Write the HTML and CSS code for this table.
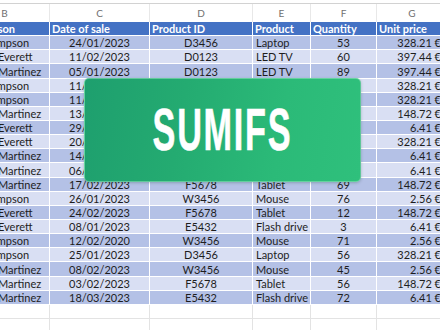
FILE: index.html
```html
<!DOCTYPE html>
<html>
<head>
<meta charset="utf-8">
<link rel="stylesheet" href="styles.css">
</head>
<body>
<div class="sheet">
  <div class="row letters"><div>B</div><div>C</div><div>D</div><div>E</div><div>F</div><div>G</div></div>
  <div class="row head"><div class="hb">Salesperson</div><div>Date of sale</div><div>Product ID</div><div>Product</div><div>Quantity</div><div>Unit price</div></div>
  <div class="row dark"><div class="nm t">Thompson</div><div class="c">24/01/2023</div><div class="c">D3456</div><div>Laptop</div><div class="c">53</div><div class="r">328.21 €</div></div>
  <div class="row light"><div class="nm">Everett</div><div class="c">11/02/2023</div><div class="c">D0123</div><div>LED TV</div><div class="c">60</div><div class="r">397.44 €</div></div>
  <div class="row dark"><div class="nm">Martinez</div><div class="c">05/01/2023</div><div class="c">D0123</div><div>LED TV</div><div class="c">89</div><div class="r">397.44 €</div></div>
  <div class="row light"><div class="nm t">Thompson</div><div class="c">11/01/2023</div><div class="c">D3456</div><div>Laptop</div><div class="c">40</div><div class="r">328.21 €</div></div>
  <div class="row dark"><div class="nm t">Thompson</div><div class="c">11/03/2023</div><div class="c">D3456</div><div>Laptop</div><div class="c">22</div><div class="r">328.21 €</div></div>
  <div class="row light"><div class="nm">Martinez</div><div class="c">13/02/2023</div><div class="c">F5678</div><div>Tablet</div><div class="c">35</div><div class="r">148.72 €</div></div>
  <div class="row dark"><div class="nm">Everett</div><div class="c">29/01/2023</div><div class="c">E5432</div><div>Flash drive</div><div class="c">18</div><div class="r">6.41 €</div></div>
  <div class="row light"><div class="nm">Everett</div><div class="c">20/02/2023</div><div class="c">D3456</div><div>Laptop</div><div class="c">27</div><div class="r">328.21 €</div></div>
  <div class="row dark"><div class="nm">Martinez</div><div class="c">14/01/2023</div><div class="c">E5432</div><div>Flash drive</div><div class="c">64</div><div class="r">6.41 €</div></div>
  <div class="row light"><div class="nm">Martinez</div><div class="c">06/03/2023</div><div class="c">E5432</div><div>Flash drive</div><div class="c">50</div><div class="r">6.41 €</div></div>
  <div class="row dark"><div class="nm">Martinez</div><div class="c">17/02/2023</div><div class="c">F5678</div><div>Tablet</div><div class="c">69</div><div class="r">148.72 €</div></div>
  <div class="row light"><div class="nm t">Thompson</div><div class="c">26/01/2023</div><div class="c">W3456</div><div>Mouse</div><div class="c">76</div><div class="r">2.56 €</div></div>
  <div class="row dark"><div class="nm">Everett</div><div class="c">24/02/2023</div><div class="c">F5678</div><div>Tablet</div><div class="c">12</div><div class="r">148.72 €</div></div>
  <div class="row light"><div class="nm">Everett</div><div class="c">08/01/2023</div><div class="c">E5432</div><div>Flash drive</div><div class="c">3</div><div class="r">6.41 €</div></div>
  <div class="row dark"><div class="nm t">Thompson</div><div class="c">12/02/2020</div><div class="c">W3456</div><div>Mouse</div><div class="c">71</div><div class="r">2.56 €</div></div>
  <div class="row light"><div class="nm t">Thompson</div><div class="c">25/01/2023</div><div class="c">D3456</div><div>Laptop</div><div class="c">56</div><div class="r">328.21 €</div></div>
  <div class="row dark"><div class="nm">Martinez</div><div class="c">08/02/2023</div><div class="c">W3456</div><div>Mouse</div><div class="c">45</div><div class="r">2.56 €</div></div>
  <div class="row light"><div class="nm">Martinez</div><div class="c">03/02/2023</div><div class="c">F5678</div><div>Tablet</div><div class="c">56</div><div class="r">148.72 €</div></div>
  <div class="row dark"><div class="nm">Martinez</div><div class="c">18/03/2023</div><div class="c">E5432</div><div>Flash drive</div><div class="c">72</div><div class="r">6.41 €</div></div>
  <div class="row empty"><div></div><div></div><div></div><div></div><div></div><div></div></div>
  <div class="row empty"><div></div><div></div><div></div><div></div><div></div><div></div></div>
</div>
<div class="card"><span class="title">SUMIFS</span></div>
</body>
</html>
```
FILE: styles.css
```css
html, body {
  margin: 0;
  padding: 0;
}
body {
  width: 440px;
  height: 330px;
  overflow: hidden;
  position: relative;
  background: #ffffff;
  font-family: Lato, "Liberation Sans", sans-serif;
  font-size: 11px;
  color: #1e1e1e;
}
.sheet {
  margin-left: -40px;
  width: 488px;
  padding-top: 3px;
}
.row {
  display: grid;
  grid-template-columns: 90px 100px 103px 58px 66px 71px;
  box-sizing: border-box;
  height: 14.15px;
  border-bottom: 1px solid #ffffff;
}
.row > div {
  box-sizing: border-box;
  border-right: 1px solid #ffffff;
  padding: 0 3px;
  white-space: nowrap;
  overflow: hidden;
  display: flex;
  align-items: center;
  line-height: 1;
}
.letters {
  height: 18.7px;
  border-top: 1px solid #d2d2d2;
  border-bottom: none;
  color: #707070;
  font-size: 10px;
}
.letters > div {
  justify-content: center;
  border-right: 1px solid #e8e8e8;
}
.head {
  height: 14.5px;
  background: #4472c4;
  color: #ffffff;
  font-weight: 700;
}
.head > div { padding-left: 2px; }
.head .hb {
  justify-content: flex-end;
  padding-right: 34px;
}
.dark { background: #b4c1e6; }
.light { background: #d9dff3; }
.nm { padding-left: 38px !important; }
.nm.t { padding-left: 18px !important; }
.c { justify-content: center; }
.r { justify-content: flex-end; padding-right: 6px !important; }
.empty {
  border-bottom: 1px solid #e3e3e3;
}
.empty > div {
  border-right: 1px solid #e3e3e3;
}
.card {
  position: absolute;
  left: 84px;
  top: 78px;
  width: 277px;
  height: 104px;
  box-sizing: border-box;
  border-radius: 5px;
  border: 1px solid rgba(150, 230, 190, 0.55);
  background: linear-gradient(100deg, #1e9f6e 0%, #24ab71 35%, #2bba78 70%, #2fc07c 100%);
  box-shadow: 0 1px 3px rgba(0, 60, 30, 0.25);
  display: flex;
  align-items: center;
  justify-content: center;
}
.title {
  display: inline-block;
  font-family: "Liberation Sans", Arial, sans-serif;
  font-weight: 700;
  font-size: 59px;
  line-height: 1;
  color: #ffffff;
  letter-spacing: 3px;
  transform: scaleX(0.58);
  -webkit-text-stroke: 0.6px #ffffff;
}
```
